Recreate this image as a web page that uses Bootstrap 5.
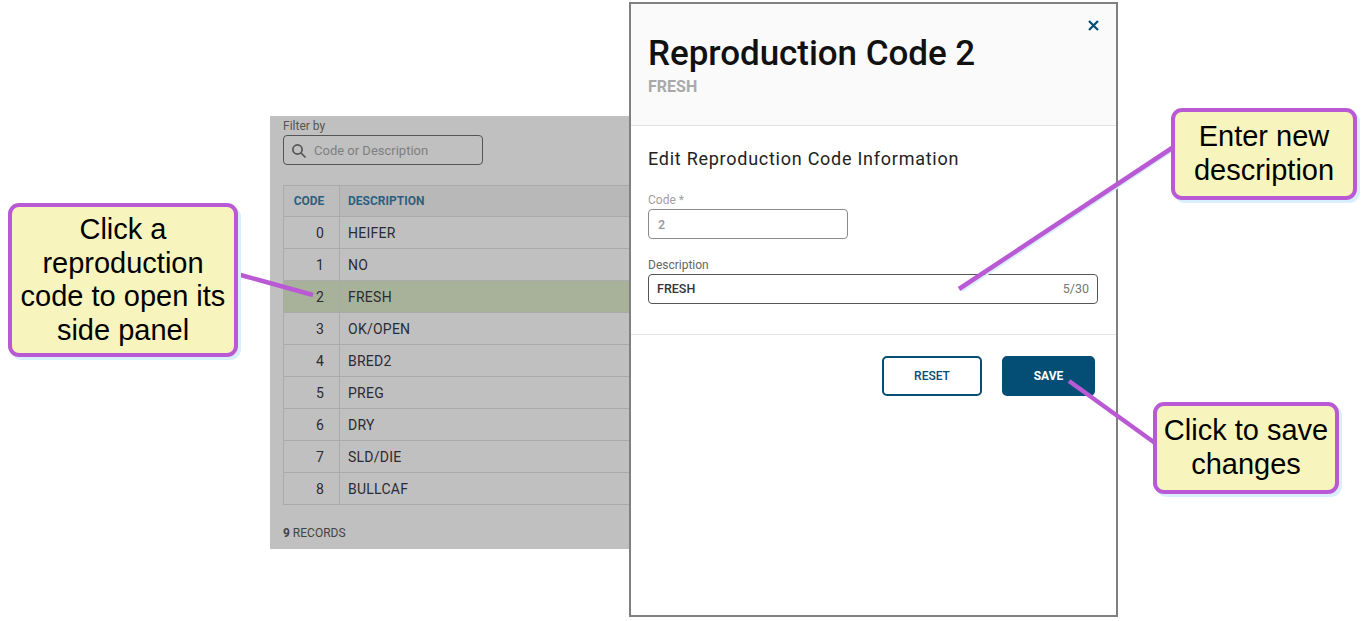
<!DOCTYPE html>
<html lang="en">
<head>
<meta charset="utf-8">
<title>Reproduction Code 2</title>
<link href="https://cdn.jsdelivr.net/npm/bootstrap@5.3.0/dist/css/bootstrap.min.css" rel="stylesheet">
<style>
html,body{margin:0;height:621px;overflow:hidden;background:#fff}
body{font-family:"Roboto","Noto Sans",sans-serif;position:relative;width:1369px}
.list-pane{position:absolute;left:270px;top:116px;width:362px;height:433px;background:#c0c0c0;padding:3px 0 0 13px;overflow:hidden;color:#2b2b33}
.fld-label{font-size:12px;line-height:14px;color:#555;display:block;margin:0 0 2px}
.search-box{width:200px;height:30px;border:1px solid #555;border-radius:4px;padding:1px 7px 0;gap:7px;font-size:13px;color:#7f7f7f}
.code-table{width:400px;margin:20px 0 0;border-collapse:separate;border-spacing:0;--bs-table-bg:transparent;--bs-table-color:#2b2b33}
.code-table th,.code-table td{height:32px;padding:2px 8px 0;border:0;border-bottom:1px solid #aaa;border-right:1px solid #aaa;font-size:14px;letter-spacing:.25px;vertical-align:middle;background:transparent;box-shadow:none}
.code-table tr>:first-child{border-left:1px solid #aaa;width:57px;text-align:right;padding-right:15px}
.code-table th{padding-top:0;font-size:12px;font-weight:700;color:#2f5f7f;background:#b8b8b8;border-top:1px solid #aaa;letter-spacing:0}
.code-table th:first-child{text-align:center;padding:0 5px 0 0;background:#bdbdbd}
.code-table .row-on td{background:#a8b29a}
.rec-count{font-size:12px;line-height:14px;margin-top:21px;color:#444}
.side-pane{position:absolute;left:629px;top:2px;width:489px;height:615px;background:#fff;border:2px solid #808080;border-radius:0;display:flex;flex-direction:column}
.pane-head{height:122px;background:#fafafa;border-bottom:1px solid #e2e2e2;padding:27px 18px 0;position:relative}
.pane-title{font-size:35px;line-height:46px;font-weight:500;color:#111;margin:0 0 0 -1px;letter-spacing:-.05px}
.pane-sub{font-size:16px;line-height:20px;font-weight:700;color:#a9a9a9;margin:0 0 0 -1px}
.close-x{position:absolute;right:17px;top:16px;width:11px;height:11px}
.pane-body{padding:22px 19px 0 17px;height:209px;border-bottom:1px solid #e4e4e4}
.sect-title{font-size:18px;line-height:22px;font-weight:400;color:#222;margin:0 0 23px;letter-spacing:.74px}
.pane-body .form-control{height:30px;border-radius:4px;padding:0 9px;font-size:12.5px;line-height:28px;box-shadow:none;background:#fff}
.code-input{width:200px;border:1px solid #8c8c8c;color:#999;font-weight:500}
.desc-input{width:450px;height:30px;border:1px solid #555;border-radius:4px;padding:1px 8px 0;font-size:12.5px;font-weight:500;color:#333}
.lab-muted{color:#a0a0a0}
.lab-dark{color:#666;margin-top:19px}
.count-txt{color:#777;font-weight:400}
.pane-foot{padding:21px 21px 0 0;gap:20px}
.pane-foot .btn{height:40px;font-size:12px;font-weight:700;border-radius:5px;padding:0;border-width:2px;--bs-btn-border-color:#044e75}
.pane-foot .btn-rst{width:100px;color:#044e75;background:#fff;font-weight:500}
.pane-foot .btn-sv{width:93px;color:#fff;background:#044e75}
.wires{position:absolute;left:0;top:0;width:1369px;height:621px;pointer-events:none}
.tip{position:absolute;background:#f7f5bd;border:4px solid #b95ad4;border-radius:11px;box-shadow:3px 3px 0 #d9eeff;font-family:"Liberation Sans",Arial,sans-serif;font-size:29px;line-height:33.5px;color:#000;text-align:center}
.tip-a{left:8px;top:203px;width:230px;height:154px;padding-top:6px}
.tip-b{left:1171px;top:108px;width:186px;height:92px;padding-top:8px}
.tip-c{left:1153px;top:402px;width:186px;height:92px;padding-top:8px}
</style>
</head>
<body>
<section class="list-pane">
  <label class="fld-label">Filter by</label>
  <div class="search-box d-flex align-items-center">
    <svg width="16" height="16" viewBox="0 0 16 16" fill="none" stroke="#555" stroke-width="1.7"><circle cx="6.5" cy="6.5" r="4.6"/><path d="M10 10l4.5 4.5"/></svg>
    <span>Code or Description</span>
  </div>
  <table class="table code-table">
    <thead><tr><th>CODE</th><th>DESCRIPTION</th></tr></thead>
    <tbody>
      <tr><td>0</td><td>HEIFER</td></tr>
      <tr><td>1</td><td>NO</td></tr>
      <tr class="row-on"><td>2</td><td>FRESH</td></tr>
      <tr><td>3</td><td>OK/OPEN</td></tr>
      <tr><td>4</td><td>BRED2</td></tr>
      <tr><td>5</td><td>PREG</td></tr>
      <tr><td>6</td><td>DRY</td></tr>
      <tr><td>7</td><td>SLD/DIE</td></tr>
      <tr><td>8</td><td>BULLCAF</td></tr>
    </tbody>
  </table>
  <div class="rec-count"><b>9</b> RECORDS</div>
</section>

<section class="side-pane">
  <header class="pane-head">
    <svg class="close-x" viewBox="0 0 11 11" fill="none" stroke="#044e75" stroke-width="2.2"><path d="M1 1l9 9M10 1l-9 9"/></svg>
    <h1 class="pane-title">Reproduction Code 2</h1>
    <div class="pane-sub">FRESH</div>
  </header>
  <div class="pane-body">
    <h2 class="sect-title">Edit Reproduction Code Information</h2>
    <label class="fld-label lab-muted">Code *</label>
    <input class="form-control code-input" value="2" readonly>
    <label class="fld-label lab-dark">Description</label>
    <div class="desc-input d-flex align-items-center justify-content-between"><span>FRESH</span><span class="count-txt">5/30</span></div>
  </div>
  <div class="pane-foot d-flex justify-content-end">
    <button class="btn btn-rst" type="button">RESET</button>
    <button class="btn btn-sv" type="button">SAVE</button>
  </div>
</section>

<svg class="wires" viewBox="0 0 1369 621" fill="none" stroke-width="4.5">
  <path d="M1174 150L962 291" stroke="#d9eeff" stroke-width="2"/>
  <path d="M237 274L313 295" stroke="#b95ad4"/>
  <path d="M1172 148L959 289" stroke="#b95ad4"/>
  <path d="M1069 381L1155 443" stroke="#b95ad4"/>
</svg>

<div class="tip tip-a">Click a<br>reproduction<br>code to open its<br>side panel</div>
<div class="tip tip-b">Enter new<br>description</div>
<div class="tip tip-c">Click to save<br>changes</div>
<script src="https://cdn.jsdelivr.net/npm/bootstrap@5.3.0/dist/js/bootstrap.bundle.min.js"></script>
</body>
</html>
